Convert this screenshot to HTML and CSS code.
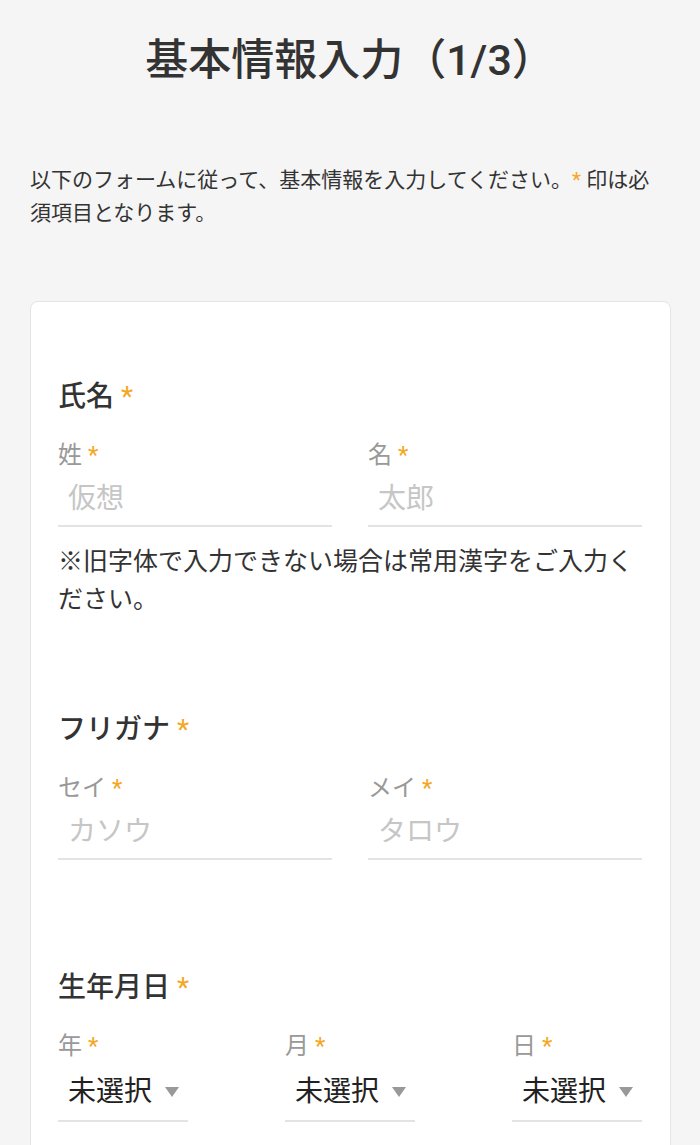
FILE: index.html
```html
<!DOCTYPE html>
<html lang="ja">
<head>
  <meta charset="UTF-8">
  <title>基本情報入力</title>
  <link rel="stylesheet" href="styles.css">
</head>
<body>

<h1 class="page-title">基本情報入力（1/3）</h1>

<p class="lead">以下のフォームに従って、基本情報を入力してください。<span class="req">*</span> 印は必須項目となります。</p>

<form class="card">
  <!-- 氏名 -->
  <section class="group note-group">
    <h2 class="group-title">氏名 <span class="req">*</span></h2>
    <div class="row">
      <div class="field">
        <label for="lastName">姓 <span class="req">*</span></label>
        <input type="text" id="lastName" placeholder="仮想">
      </div>
      <div class="field">
        <label for="firstName">名 <span class="req">*</span></label>
        <input type="text" id="firstName" placeholder="太郎">
      </div>
    </div>
    <p class="note">※旧字体で入力できない場合は常用漢字をご入力ください。</p>
  </section>

  <!-- フリガナ -->
  <section class="group">
    <h2 class="group-title">フリガナ <span class="req">*</span></h2>
    <div class="row">
      <div class="field">
        <label for="lastKana">セイ <span class="req">*</span></label>
        <input type="text" id="lastKana" placeholder="カソウ">
      </div>
      <div class="field">
        <label for="firstKana">メイ <span class="req">*</span></label>
        <input type="text" id="firstKana" placeholder="タロウ">
      </div>
    </div>
  </section>

  <!-- 生年月日 -->
  <section class="group">
    <h2 class="group-title">生年月日 <span class="req">*</span></h2>
    <div class="row date-row">
      <div class="date-field">
        <label for="year">年 <span class="req">*</span></label>
        <div class="select-wrap">
          <select id="year"><option>未選択</option></select>
        </div>
      </div>
      <div class="date-field">
        <label for="month">月 <span class="req">*</span></label>
        <div class="select-wrap">
          <select id="month"><option>未選択</option></select>
        </div>
      </div>
      <div class="date-field">
        <label for="day">日 <span class="req">*</span></label>
        <div class="select-wrap">
          <select id="day"><option>未選択</option></select>
        </div>
      </div>
    </div>
  </section>
</form>

</body>
</html>
```

FILE: styles.css
```css
body {
  margin: 0;
  background-color: #f5f5f5;
  color: #333;
  font-family: Roboto, "Noto Sans CJK JP", sans-serif;
}
.page-title {
  margin: 0;
  padding-top: 30px;
  font-size: 43px;
  line-height: 60px;
  font-weight: 500;
  text-align: center;
}
.lead {
  margin: 74px 30px 0;
  font-size: 21px;
  line-height: 33px;
}
.req {
  color: #f5a623; /* orange asterisk */
  font-weight: 400;
}
.card {
  margin: 71px 29px 0 30px;
  padding: 0 28px 60px 27px;
  background: #fff;
  border: 1px solid #e4e4e4;
  border-radius: 8px;
}
.group:first-child {
  padding-top: 75px;
}
.group + .group {
  margin-top: 108px;
}
.note-group + .group {
  margin-top: 91px;
}
.group-title {
  margin: 0;
  font-size: 28px;
  line-height: 40px;
  font-weight: 500;
}
.row {
  display: flex;
  gap: 36px;
}
.field {
  flex: 1;
}
label {
  display: block;
  margin-top: 21px;
  font-size: 24px;
  line-height: 34px;
  color: #999;
}
input {
  display: block;
  width: 100%;
  height: 49px;
  margin-top: 6px;
  padding: 0 10px 7px;
  box-sizing: border-box;
  border: none;
  border-bottom: 2px solid #e3e3e3;
  background: transparent;
  font-family: inherit;
  font-size: 28px;
  color: #333;
  outline: none;
}
input::placeholder {
  color: #c6c6c6;
}
.note {
  margin: 16px 0 0;
  font-size: 25px;
  line-height: 38px;
}
.date-row {
  justify-content: space-between;
  gap: 0;
}
.date-field {
  width: 130px;
}
.select-wrap {
  position: relative;
  margin-top: 8px;
}
.select-wrap::after {
  content: "";
  position: absolute;
  top: 16px;
  right: 9px;
  border-left: 7.5px solid transparent;
  border-right: 7.5px solid transparent;
  border-top: 10px solid #999;
  pointer-events: none;
}
select {
  display: block;
  width: 100%;
  height: 51px;
  padding: 0 10px 9px;
  box-sizing: border-box;
  border: none;
  border-bottom: 2px solid #e3e3e3;
  border-radius: 0;
  background: transparent;
  appearance: none;
  -webkit-appearance: none;
  font-family: inherit;
  font-size: 28px;
  color: #222;
  outline: none;
}
```
